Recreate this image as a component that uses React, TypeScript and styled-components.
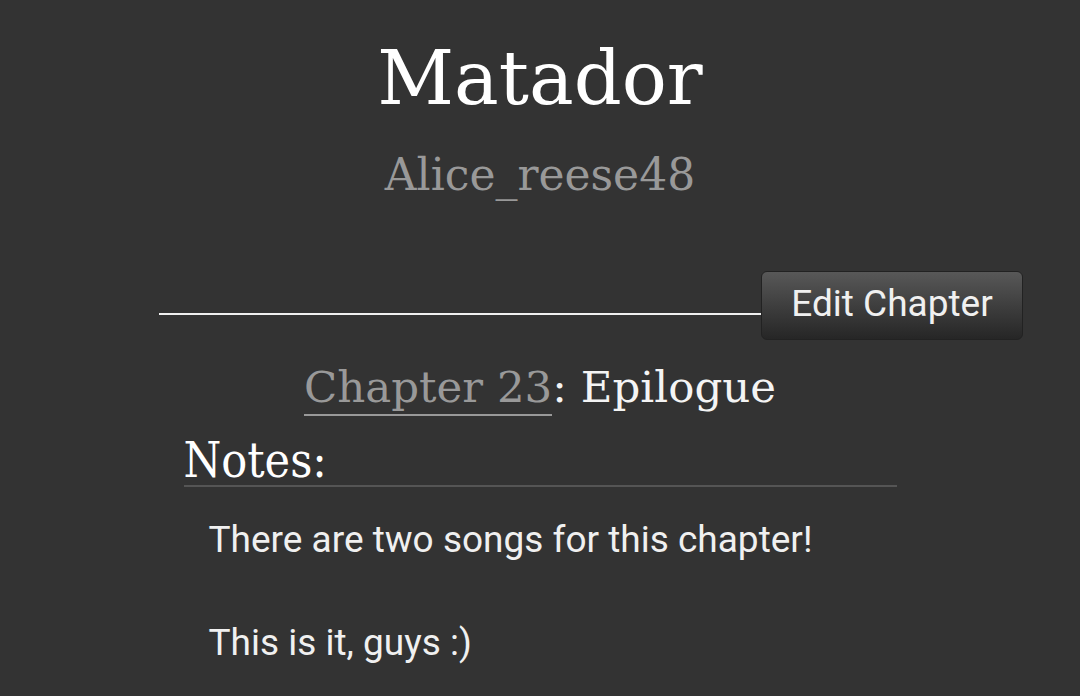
import React from 'react';
import styled, { createGlobalStyle } from 'styled-components';

const GlobalStyle = createGlobalStyle`
  html, body {
    margin: 0;
    padding: 0;
    background: #333333;
  }
  body {
    font-family: Roboto, "Liberation Sans", sans-serif;
    color: #eeeeee;
  }
`;

const Page = styled.div`
  width: 1080px;
  height: 696px;
  overflow: hidden;
  background: #333333;
`;

const Header = styled.header`
  display: flex;
  flex-direction: column;
  align-items: center;
  padding-top: 28px;
`;

const StoryTitle = styled.h1`
  margin: 0;
  font-family: "DejaVu Serif", "Liberation Serif", serif;
  font-weight: normal;
  font-size: 75px;
  line-height: 100px;
  color: #ffffff;
`;

const Author = styled.a`
  margin-top: 17px;
  font-family: "DejaVu Serif", "Liberation Serif", serif;
  font-size: 44px;
  line-height: 60px;
  color: #999999;
  text-decoration: none;
`;

const Toolbar = styled.div`
  display: flex;
  align-items: flex-end;
  margin: 66px 57px 0 159px;
`;

const Rule = styled.div`
  flex: 1;
  height: 2px;
  background: #f0f0f0;
  margin-bottom: 25px;
`;

const EditButton = styled.button`
  width: 262px;
  height: 69px;
  border: 1px solid #222222;
  border-radius: 6px;
  background: linear-gradient(to bottom, #585858 0%, #3c3c3c 55%, #262626 100%);
  color: #f0f0f0;
  font-family: Roboto, "Liberation Sans", sans-serif;
  font-size: 37px;
  padding: 0;
  padding-bottom: 5px;
  cursor: pointer;
`;

const ChapterTitle = styled.h2`
  margin: 17px 0 0;
  text-align: center;
  font-family: "DejaVu Serif", "Liberation Serif", serif;
  font-weight: normal;
  font-size: 43.5px;
  line-height: 60px;
  color: #f4f4f4;
`;

const ChapterLink = styled.a`
  color: #999999;
  text-decoration: none;
  border-bottom: 2px solid #999999;
  padding-bottom: 2px;
`;

const Notes = styled.section`
  width: 713px;
  margin: 18px auto 0;
`;

const NotesHeading = styled.h3`
  margin: 0;
  font-family: "DejaVu Serif", "Liberation Serif", serif;
  font-stretch: condensed;
  font-weight: normal;
  font-size: 48px;
  line-height: 50px;
  color: #ffffff;
  border-bottom: 2px solid #555555;
`;

const NotesBody = styled.div`
  padding: 27px 25px 0;
  font-size: 37px;
  line-height: 51.5px;
  color: #f0f0f0;
`;

const Paragraph = styled.p`
  margin: 0 0 51.5px;
`;

export default function App() {
  return (
    <Page>
      <GlobalStyle />
      <Header>
        <StoryTitle>Matador</StoryTitle>
        <Author href="#">Alice_reese48</Author>
      </Header>
      <Toolbar>
        <Rule />
        <EditButton>Edit Chapter</EditButton>
      </Toolbar>
      <ChapterTitle>
        <ChapterLink href="#">Chapter 23</ChapterLink>: Epilogue
      </ChapterTitle>
      <Notes>
        <NotesHeading>Notes:</NotesHeading>
        <NotesBody>
          <Paragraph>There are two songs for this chapter!</Paragraph>
          <Paragraph>This is it, guys :)</Paragraph>
        </NotesBody>
      </Notes>
    </Page>
  );
}
